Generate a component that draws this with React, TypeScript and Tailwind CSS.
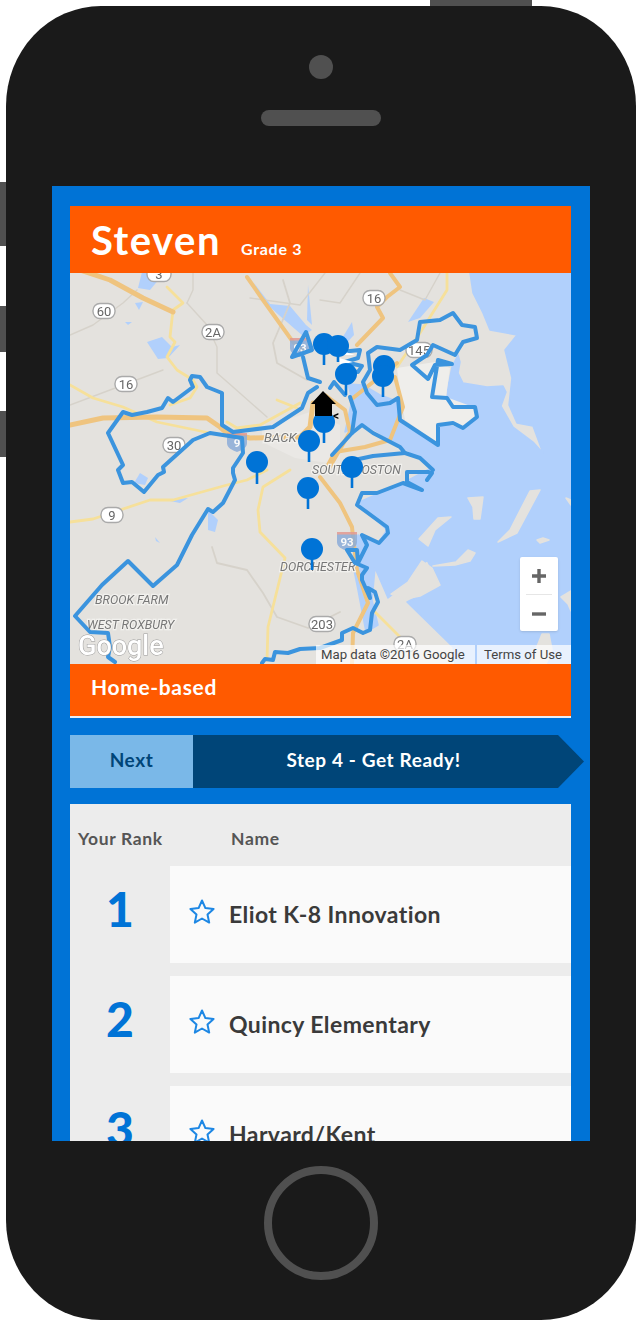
import React from "react";

const font = { fontFamily: "Lato, 'Open Sans', sans-serif" };

const Route = ({ d }: { d: string }) => (
  <polyline points={d} fill="none" stroke="#3b94de" strokeWidth={4} strokeLinejoin="round" strokeLinecap="round" />
);
const Road = ({ d, c = "#efc47f", w = 4 }: { d: string; c?: string; w?: number }) => (
  <polyline points={d} fill="none" stroke={c} strokeWidth={w} strokeLinejoin="round" strokeLinecap="round" />
);
const Shield = ({ x, y, t, w = 22 }: { x: number; y: number; t: string; w?: number }) => (
  <g>
    <rect x={x - w / 2} y={y - 7.5} width={w} height={15} rx={7} fill="#fff" stroke="#aaa" strokeWidth={1.4} />
    <text x={x} y={y + 4.5} textAnchor="middle" fontSize={13} fill="#666" fontFamily="Roboto, sans-serif">{t}</text>
  </g>
);
const Interstate = ({ x, y, t }: { x: number; y: number; t: string }) => (
  <g opacity={0.85}>
    <path d={`M${x - 10} ${y - 8}h20v9c0 5-5 7-10 9c-5-2-10-4-10-9z`} fill="#8cadd9" />
    <rect x={x - 10} y={y - 9} width={20} height={2.5} fill="#e29a92" />
    <text x={x} y={y + 5} textAnchor="middle" fontSize={11.5} fontWeight={700} fill="#fff" fontFamily="Roboto, sans-serif">{t}</text>
  </g>
);
const Label = ({ x, y, t, s = 12.4 }: { x: number; y: number; t: string; s?: number }) => (
  <text x={x} y={y} fontSize={s} fontStyle="italic" fill="#777" stroke="#f2f1ee" strokeWidth={2.5} paintOrder="stroke" fontFamily="Roboto, sans-serif">{t}</text>
);
const Pin = ({ x, y, len = 21 }: { x: number; y: number; len?: number }) => (
  <g>
    <line x1={x} y1={y} x2={x} y2={y + len} stroke="#0073d6" strokeWidth={2.6} />
    <circle cx={x} cy={y} r={11} fill="#0073d6" />
  </g>
);
const Island = ({ p }: { p: string }) => (
  <polygon points={p} fill="#e4e2de" stroke="#e4e2de" strokeWidth={1.5} strokeLinejoin="round" />
);

function MapArt() {
  return (
    <svg viewBox="70 273 501 391" className="block w-[501px] h-[391px] blur-[0.4px]">
      <rect x={70} y={273} width={501} height={391} fill="#e4e2de" />
      {/* sea */}
      <polygon fill="#b1d0fc" stroke="#b1d0fc" strokeWidth={1.5} strokeLinejoin="round" points="470,273 571,273 571,664 455,664 453,647 407,602 417,597 440,585 427,560 407,583 388,598 375,568 372,600 378,625 366,632 358,590 352,560 358,535 378,543 387,530 357,503 403,483 433,467 407,450 363,423 345,432 352,400 348,384 363,385 380,395 402,403 400,420 432,440 440,445 440,423 463,428 478,417 477,408 460,407 447,397 448,387 452,367 458,355 460,362 458,373 463,383 487,387 503,386 506,392 501,406 513,427 533,442 543,453 533,426 517,423 509,405 512,378 505,350 517,335 490,330 483,313 473,293" />
      {/* lighter city */}
      <polygon fill="#efeeeb" points="397,368 435,362 450,368 446,397 476,408 477,417 463,428 440,423 440,445 405,420 400,395" />
      <polygon fill="#eae8e5" points="262,428 310,412 340,425 340,465 295,458 262,442" />
      {/* islands */}
      <Island p="468,498 483,497 480,519 474,519 473,507" />
      <Island p="540,490 530,491 510,530 498,542 517,533" />
      <Island p="451,517 438,518 419,539 428,546 435,530" />
      <Island p="537,540 543,538 549,540 540,543" />
      <Island p="475,553 468,550 456,562 433,566 455,565 470,561" />
      <Island p="566,498 571,500 571,505" />
      <Island p="571,591 561,597 568,604 571,611" />
      <Island p="542,634 549,634 552,650 546,664 530,664" />
      <Island p="422,561 432,568 440,585 420,596 405,599 391,594 408,582" />
      {/* inland water */}
      <g fill="#b1d0fc">
        <polygon points="147,342 162,337 172,347 180,345 168,358 158,359" />
        <polygon points="142,272 165,272 150,290 138,288" />
        <polygon points="135,303 143,302 139,310" />
        <polygon points="125,322 132,322 128,325" />
        <polygon points="254,283 270,304 290,306 306,325 312,330 303,336 280,316 262,300" />
        <polygon points="308,285 312,325 307,320" />
        <polygon points="140,473 148,478 145,485 134,483" />
        <polygon points="208,510 218,520 215,532 208,530" />
        <polygon points="424,298 434,302 420,318 408,322" />
        <polygon points="352,322 354,335 340,350 336,348" />
        <polygon points="165,500 188,498 180,503" />
        <polygon points="155,537 156,541 160,543" />
      </g>
      {/* gray roads */}
      <g>
        <Road c="#d6d2ca" w={1.4} d="70,335 93,325 123,303 137,290" />
        <Road c="#d6d2ca" w={1.4} d="187,303 207,325 217,347 217,373 233,387 267,417" />
        <Road c="#d6d2ca" w={1.4} d="70,405 110,390 163,370" />
        <Road c="#d6d2ca" w={1.4} d="193,273 193,290 187,303" />
        <Road c="#d6d2ca" w={1.8} d="283,280 290,303 273,343 277,363 307,380" />
        <Road c="#d6d2ca" w={1.8} d="212,547 217,563 247,570 263,593 277,617 308,628 340,612" />
        <Road c="#d6d2ca" w={1.4} d="325,273 300,305 250,298" />
        <Road c="#d6d2ca" w={1.4} d="360,273 340,303 320,300" />
        <Road c="#d6d2ca" w={1.4} d="400,290 425,300 440,273" />
      </g>
      {/* yellow roads */}
      <g>
        <Road c="#f6e09a" w={2.8} d="167,287 183,303 173,310 170,337 175,342 167,357 177,370 193,380 197,387 190,398 170,405" />
        <Road c="#f6e09a" w={2.8} d="70,385 93,398 123,407 157,422 210,433" />
        <Road c="#f6e09a" w={2.8} d="277,400 297,408" />
        <Road c="#f6e09a" w={2.8} d="227,422 237,428 260,425 300,403" />
        <Road c="#f6e09a" w={2.8} d="447,273 447,290 420,333 397,367" />
        <Road c="#f6e09a" w={2.8} d="70,522 93,519 150,500 173,500 227,485 247,480 267,470" />
        <Road c="#f6e09a" w={2.8} d="290,470 263,487 258,510 260,532 285,558 268,627 267,660" />
        <Road c="#f6e09a" w={2.8} d="373,610 400,637" />
      </g>
      {/* orange roads */}
      <g>
        <Road d="80,270 110,280 143,298 173,312" w={5} />
        <Road d="70,425 103,418 157,417 207,418 220,427 227,433 250,438 300,437 310,427 313,403" w={5} />
        <Road d="247,277 263,300 293,342 303,350" />
        <Road d="390,273 400,287 387,297 377,307 383,318 357,345" />
        <Road d="397,363 353,398" />
        <Road d="395,377 403,407 390,440 365,447 335,452 328,465" />
        <Road d="320,477 340,503 352,527 353,537 357,570 368,603 353,633 352,664" />
        <Road d="325,395 345,410 350,432 328,470" />
      </g>
      {/* shields */}
      <Shield x={159} y={274} t="3" w={24} />
      <Shield x={104} y={311} t="60" />
      <Shield x={213} y={332} t="2A" />
      <Shield x={126} y={384} t="16" />
      <Shield x={174} y={445} t="30" />
      <Shield x={112} y={515} t="9" />
      <Shield x={374} y={298} t="16" />
      <Shield x={419} y={350} t="145" w={26} />
      <Shield x={322} y={624} t="203" w={26} />
      <Shield x={405} y={644} t="2A" />
      <Interstate x={300} y={347} t="93" />
      <Interstate x={237} y={442} t="9" />
      <Interstate x={347} y={541} t="93" />
      <Label x={264} y={442} t="BACK" s={13.2} />
      <Label x={312} y={474} t="SOUTH BOSTON" />
      <Label x={280} y={571} t="DORCHESTER" />
      <Label x={95} y={604} t="BROOK FARM" />
      <Label x={87} y={629} t="WEST ROXBURY" />
      {/* route */}
      <Route d="292,357 306,332 312,350 292,357" />
      <Route d="303,357 308,378 320,382" />
      <Route d="317,387 308,393 302,408 273,427 233,432 222,425 222,393 207,387 200,377 192,376 190,380 193,387 173,402 168,398 162,408 147,412 132,415 123,412 108,433 123,465 118,470 123,483 132,482 144,492 158,475 164,472 163,467 193,440 210,433 242,438 243,453 233,468 233,473 235,480 223,503 213,512 208,509 192,535 177,565 153,586 128,561 102,585 75,616 90,632 108,633 110,647 108,657 115,662" />
      <Route d="262,663 265,659 273,660 275,652 288,653 300,649 320,648 342,640 342,633 353,628 363,633 370,630 372,613 378,602 375,592 368,588 370,598 362,580 362,575 367,568 360,565 355,563 347,550 357,550 358,563 367,545 362,535 379,543 388,533 387,527 357,505 362,493 377,493 403,483 422,490 407,482 407,472 428,472 432,473 427,480" />
      <Route d="332,455 352,433 355,412 350,397" />
      <Route d="352,433 362,425 373,433 400,447 405,453 373,456 345,462" />
      <Route d="405,453 420,458 433,470" />
      <Route d="363,382 370,370 368,353 377,347 400,350 417,340 420,322 440,320 453,313 462,325 475,327 477,338 463,342 458,350 455,355 433,345 427,355 412,365 428,379 435,365 452,364 438,360 432,397 447,398 453,407 475,407 477,417 463,428 453,423 438,425 438,445 400,420 398,398 390,403 377,405 367,393 363,382" />
      <Route d="340,352 360,350 358,358 345,362 362,366 358,372 345,370" />
      <Route d="330,388 334,382 345,395" />
      <polygon points="339,358 353,362 340,365" fill="#fff" />
      <polygon points="342,351 355,355 343,355" fill="#fff" />
      {/* pins */}
      <Pin x={309} y={441} />
      <Pin x={257} y={462} len={22} />
      <Pin x={352} y={467} />
      <Pin x={308} y={488} />
      <Pin x={312} y={549} />
      <Pin x={324} y={344} />
      <Pin x={338} y={346} len={16} />
      <Pin x={346} y={374} />
      <Pin x={384} y={366} len={14} />
      <Pin x={383} y={376} len={21} />
      <Pin x={324} y={422} />
      <polygon points="323,391 336,404 332,404 332,416 315,416 315,404 311,404" fill="#000" />
      <text x={333} y={420} fontSize={12} fontWeight={700} fill="#000" fontFamily="Roboto, sans-serif">&lt;</text>
      <text x={78} y={655} fontSize={27} fontWeight={500} fill="#fff" stroke="#9a9a9a" strokeWidth={1} paintOrder="stroke" fontFamily="Roboto, sans-serif">Google</text>
    </svg>
  );
}

function Star() {
  return (
    <svg viewBox="0 0 28 28" className="w-[28px] h-[28px] shrink-0">
      <path d="M14 2.5l3.4 7.6 8.2.9-6.1 5.5 1.7 8.1L14 20.5l-7.2 4.1 1.7-8.1L2.4 11l8.2-.9z" fill="none" stroke="#1d87e4" strokeWidth={2} strokeLinejoin="round" />
    </svg>
  );
}

const rows = [
  { n: "1", name: "Eliot K-8 Innovation" },
  { n: "2", name: "Quincy Elementary" },
  { n: "3", name: "Harvard/Kent" },
];

export default function App() {
  return (
    <div className="relative w-[636px] h-[1320px] bg-white overflow-hidden" style={font}>
      <div className="absolute left-[430px] top-0 w-[102px] h-[8px] bg-[#505050]" />
      <div className="absolute left-0 top-[182px] w-[8px] h-[64px] bg-[#505050]" />
      <div className="absolute left-0 top-[306px] w-[8px] h-[46px] bg-[#505050]" />
      <div className="absolute left-0 top-[411px] w-[8px] h-[46px] bg-[#505050]" />

      <div className="relative translate-x-[6px] translate-y-[6px] w-[630px] h-[1314px] bg-[#1a1a1a] rounded-[95px/100px] flex flex-col items-center">
        <div className="mt-[49px] w-[24px] h-[24px] rounded-full bg-[#505050]" />
        <div className="mt-[31px] w-[120px] h-[16px] rounded-full bg-[#505050]" />

        <div className="mt-[60px] w-[538px] h-[955px] bg-[#0073d6] overflow-hidden pl-[18px] pr-[19px] pt-[20px]">
          <div className="h-[67px] bg-[#ff5a00] flex items-baseline pl-[21px] pt-[11px] text-white font-bold">
            <span className="text-[40px] leading-[47px] tracking-[1.5px]">Steven</span>
            <span className="ml-[20px] text-[16px] tracking-[0.7px]">Grade 3</span>
          </div>

          <div className="relative h-[391px] overflow-hidden">
            <MapArt />
            <div className="absolute left-[450px] top-[284px] w-[38px] h-[74px] bg-white rounded-[2px] shadow-sm flex flex-col items-center">
              <svg viewBox="0 0 38 37" className="w-[38px] h-[37px]">
                <path d="M12 19h14M19 12v14" stroke="#666" strokeWidth={3.4} />
              </svg>
              <div className="w-[26px] h-px bg-[#e6e6e6]" />
              <svg viewBox="0 0 38 36" className="w-[38px] h-[36px]">
                <path d="M12 19h14" stroke="#666" strokeWidth={3.4} />
              </svg>
            </div>
            <div className="absolute right-0 bottom-0 h-[19px] flex gap-[2px] text-[13.2px] leading-[19px] text-[#444]" style={{ fontFamily: "Roboto, sans-serif" }}>
              <div className="w-[159px] pl-[5px] bg-white/70">Map data ©2016 Google</div>
              <div className="w-[94px] pl-[7px] bg-white/70">Terms of Use</div>
            </div>
          </div>

          <div className="h-[52px] bg-[#ff5a00] flex items-center pl-[21px] pb-[6px] text-white font-bold text-[21px] tracking-[0.65px]">Home-based</div>
          <div className="h-[2px] bg-[#e8eef5]" />

          <div className="mt-[17px] flex w-[514px] h-[53px] font-bold text-[19px] tracking-[0.6px]">
            <div className="w-[123px] bg-[#7ab8e8] text-[#004578] flex items-center justify-center pb-[2px]">Next</div>
            <div className="flex-1 bg-[#004578] text-white flex items-center justify-center pr-[30px] pb-[2px] [clip-path:polygon(0_0,365px_0,391px_50%,365px_100%,0_100%)]">Step 4 - Get Ready!</div>
          </div>

          <div className="mt-[16px] bg-[#ececec] font-bold">
            <div className="h-[62px] flex items-center pl-[8px] pt-[9px] text-[#555] text-[17.5px] tracking-[0.65px]">
              <span className="w-[153px]">Your Rank</span>
              <span>Name</span>
            </div>
            <div className="flex flex-col gap-[13px]">
              {rows.map((r) => (
                <div key={r.n} className="flex h-[97px]">
                  <div className="w-[100px] flex justify-center pt-[15px] text-[#0073d6] text-[48px] leading-[56px] font-black">{r.n}</div>
                  <div className="flex-1 bg-[#fafafa] flex items-center pl-[18px] gap-[13px] text-[#3a3a3a] text-[23px] tracking-[0.4px]">
                    <span className="-translate-y-[3px]"><Star /></span>
                    <span>{r.name}</span>
                  </div>
                </div>
              ))}
            </div>
          </div>
        </div>

        <div className="mt-[25px] w-[114px] h-[114px] rounded-full border-[8px] border-[#505050]" />
      </div>
    </div>
  );
}
